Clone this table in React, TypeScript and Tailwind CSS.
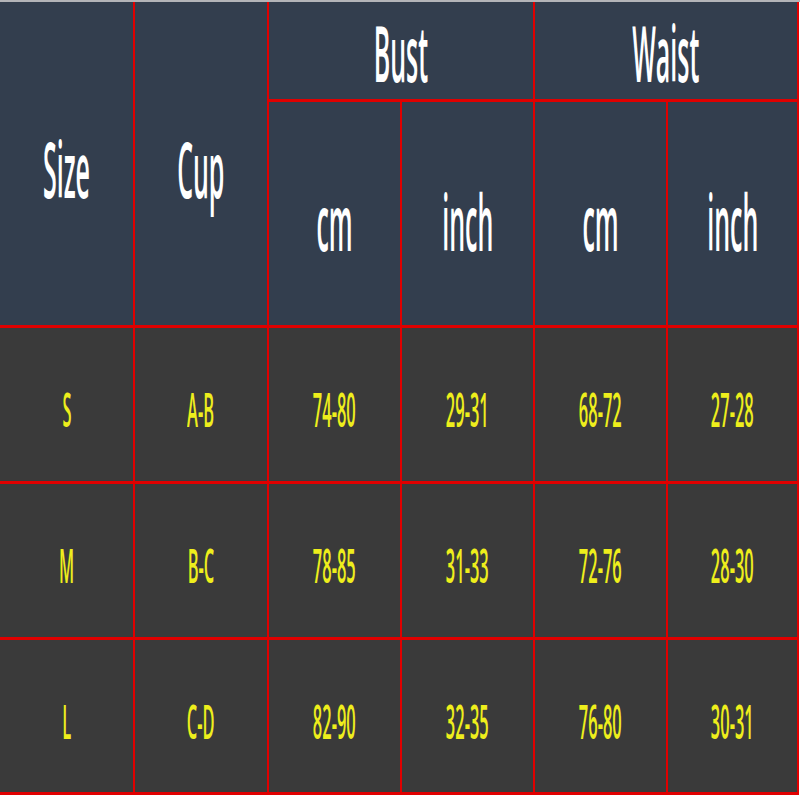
const rows = [
  ["S", "A-B", "74-80", "29-31", "68-72", "27-28"],
  ["M", "B-C", "78-85", "31-33", "72-76", "28-30"],
  ["L", "C-D", "82-90", "32-35", "76-80", "30-31"],
];

function Head({ children, className = "" }: { children: string; className?: string }) {
  return (
    <div className={`bg-[#333e4e] flex items-center justify-center ${className}`}>
      <span className="inline-block scale-x-[0.32] text-[78px] leading-none font-semibold text-white whitespace-nowrap">
        {children}
      </span>
    </div>
  );
}

export default function App() {
  return (
    <div className="w-[800px] h-[800px] bg-white font-['Open_Sans',sans-serif]">
      <div className="h-[2px] bg-[#b4b4b8]" />
      <div className="w-[799px] grid grid-cols-[133px_132px_131px_131px_131px_129px] grid-rows-[97px_223px_153px_153px_152px] gap-x-[2px] gap-y-[3px] bg-[#e00000] border-r-2 border-b-[3px] border-[#e00000]">
        <Head className="row-span-2 pt-[8px]">Size</Head>
        <Head className="row-span-2 pt-[8px]">Cup</Head>
        <Head className="col-span-2 pt-[2px]">Bust</Head>
        <Head className="col-span-2 pt-[2px]">Waist</Head>
        <Head className="pt-[14px]">cm</Head>
        <Head className="pt-[14px]">inch</Head>
        <Head className="pt-[14px]">cm</Head>
        <Head className="pt-[14px]">inch</Head>
        {rows.map((r) =>
          r.map((v, i) => (
            <div key={r[0] + i} className="bg-[#3a3a3a] flex items-center justify-center pt-[10px]">
              <span className="inline-block scale-x-[0.35] text-[47px] leading-none font-semibold text-[#eeee1c] whitespace-nowrap">
                {v}
              </span>
            </div>
          ))
        )}
      </div>
    </div>
  );
}
